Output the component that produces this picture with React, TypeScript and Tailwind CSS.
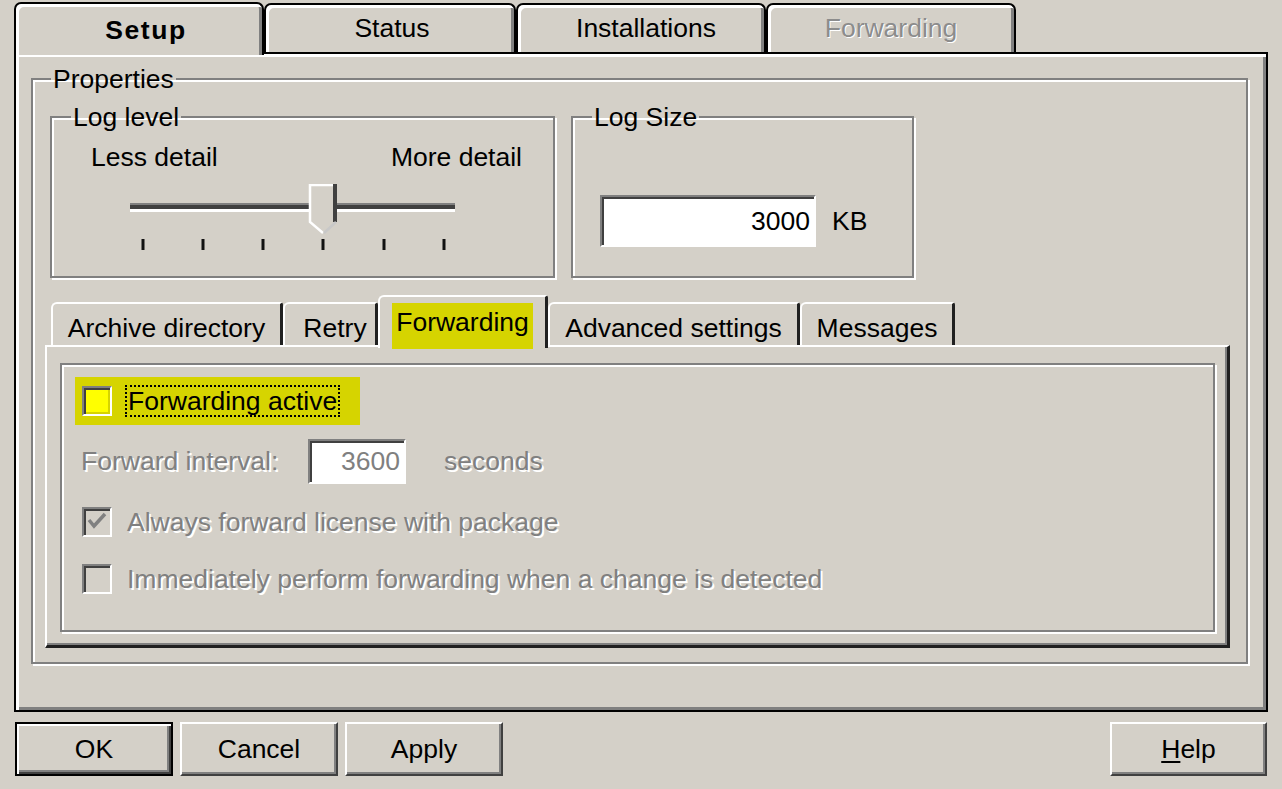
import type { ReactNode } from "react";

const raised =
  "border-2 border-t-white border-l-white border-r-[#404040] border-b-[#404040] shadow-[inset_-2px_-2px_0_#808080]";
const sunken =
  "border-2 border-t-[#808080] border-l-[#808080] border-r-white border-b-white shadow-[inset_2px_2px_0_#404040]";
const etched =
  "border-2 border-[#808080] shadow-[inset_2px_2px_0_#fff,2px_2px_0_#fff]";
const dim = "text-[#808080] [text-shadow:2px_2px_0_#fff]";

function TopTab({
  label,
  width,
  selected,
  disabled,
  className = "",
}: {
  label: string;
  width: string;
  selected?: boolean;
  disabled?: boolean;
  className?: string;
}) {
  return (
    <div
      className={`flex justify-center rounded-t-[7px] border-2 border-b-0 border-black bg-[#d4d0c8] shadow-[inset_3px_3px_0_#fff,inset_-3px_0_0_#808080] ${width} ${
        selected
          ? "relative z-10 -mb-[3px] h-[53px] pt-[11px] font-bold tracking-[1.6px]"
          : "h-[49px] pt-[8px]"
      } ${disabled ? "text-[#8c8c8c] [text-shadow:1px_1px_0_#fff]" : ""} ${className}`}
    >
      {label}
    </div>
  );
}

function SubTab({
  children,
  width,
  selected,
  className = "",
}: {
  children: ReactNode;
  width: string;
  selected?: boolean;
  className?: string;
}) {
  return (
    <div
      className={`flex justify-center rounded-tl-[6px] rounded-tr-[3px] border-l-2 border-t-2 border-r-[3px] border-white border-r-[#202020] bg-[#d4d0c8] ${width} ${
        selected ? "relative z-10 -mb-[3px] h-[53px] pt-[10px]" : "h-[43px] pt-[9px]"
      } ${className}`}
    >
      {children}
    </div>
  );
}

function Check({
  checked,
  disabled,
  highlight,
}: {
  checked?: boolean;
  disabled?: boolean;
  highlight?: boolean;
}) {
  const fill = highlight
    ? "bg-[#ffff00] shadow-[inset_2px_2px_0_#404040,inset_-2px_-2px_0_#d6d400]"
    : disabled
      ? "bg-[#d4d0c8] shadow-[inset_2px_2px_0_#404040,inset_-2px_-2px_0_#d4d0c8]"
      : "bg-white shadow-[inset_2px_2px_0_#404040,inset_-2px_-2px_0_#d4d0c8]";
  return (
    <span
      className={`flex h-[30px] w-[30px] shrink-0 border-2 border-t-[#808080] border-l-[#808080] border-r-white border-b-white ${fill}`}
    >
      {checked && (
        <svg width="26" height="26" viewBox="0 0 26 26">
          <path
            d="M5 11 L10 17 L21 5"
            fill="none"
            stroke="#808080"
            strokeWidth="3.5"
          />
        </svg>
      )}
    </span>
  );
}

function Slider() {
  const ticks = [13, 73, 133, 193, 254, 314];
  return (
    <svg width="330" height="68" viewBox="0 0 330 68" className="ml-[78px] mt-[12px]">
      <rect x="0" y="19" width="325" height="2" fill="#808080" />
      <rect x="0" y="21" width="325" height="4" fill="#404040" />
      <rect x="0" y="25" width="325" height="3" fill="#ffffff" />
      <polygon points="179,0 207,0 207,38 193,50 179,38" fill="#d4d0c8" />
      <polyline points="193,49 180,38 180,1 206,1" fill="none" stroke="#fff" strokeWidth="2.5" />
      <line x1="205" y1="0" x2="205" y2="38" stroke="#404040" strokeWidth="4" />
      <line x1="206" y1="38" x2="194" y2="49" stroke="#c8c8c8" strokeWidth="2.5" />
      {ticks.map((x) => (
        <rect key={x} x={x - 1.5} y="55" width="3" height="11" fill="#111" />
      ))}
    </svg>
  );
}

function Button({ children, isDefault, className = "" }: { children: ReactNode; isDefault?: boolean; className?: string }) {
  return (
    <div
      className={`flex h-[54px] items-center justify-center bg-[#d4d0c8] ${
        isDefault
          ? "border-2 border-black shadow-[inset_2px_2px_0_#fff,inset_-2px_-2px_0_#404040,inset_-4px_-4px_0_#808080]"
          : raised
      } ${className}`}
    >
      {children}
    </div>
  );
}

export default function App() {
  return (
    <div className="flex h-[789px] w-[1282px] flex-col overflow-hidden bg-[#d4d0c8] pt-[2px] font-['Liberation_Sans',Arial,sans-serif] text-[26.5px] leading-[30px] text-black">
      <div className="flex h-[50px] items-end pl-[14px]">
        <TopTab label="Setup" width="w-[250px]" selected className="pl-[14px]" />
        <TopTab label="Status" width="w-[252px]" className="pl-[4px]" />
        <TopTab label="Installations" width="w-[250px]" className="pl-[10px]" />
        <TopTab label="Forwarding" width="w-[250px]" disabled />
      </div>

      <div className="ml-[14px] h-[660px] w-[1254px] border-2 border-black pl-[15px] pt-[10px] shadow-[inset_3px_3px_0_#fff,inset_-3px_-3px_0_#808080]">
        <fieldset className={`h-[600px] w-[1217px] pl-[12px] ${etched}`}>
          <legend className="ml-[6px] px-[2px]">Properties</legend>

          <div className="mt-[8px] flex">
            <fieldset className={`ml-[5px] h-[176px] w-[505px] ${etched}`}>
              <legend className="ml-[19px] px-[2px]">Log level</legend>
              <div className="mt-[10px] flex justify-between pl-[39px] pr-[31px]">
                <span>Less detail</span>
                <span>More detail</span>
              </div>
              <Slider />
            </fieldset>

            <fieldset className={`ml-[16px] h-[176px] w-[343px] ${etched}`}>
              <legend className="ml-[19px] px-[2px]">Log Size</legend>
              <div className="mt-[63px] flex items-center gap-[16px] pl-[27px]">
                <div className={`flex h-[52px] w-[216px] items-center justify-end bg-white pr-[4px] ${sunken}`}>
                  3000
                </div>
                <span>KB</span>
              </div>
            </fieldset>
          </div>

          <div className="mt-[17px] flex h-[50px] items-end pl-[6px]">
            <SubTab width="w-[232px]">Archive directory</SubTab>
            <SubTab width="w-[95px]" className="pl-[10px]">Retry</SubTab>
            <SubTab width="w-[170px]" selected>
              <span className="-mt-[4px] h-[46px] bg-[#d6d400] px-[4px] pt-[4px]">Forwarding</span>
            </SubTab>
            <SubTab width="w-[252px]">Advanced settings</SubTab>
            <SubTab width="w-[155px]">Messages</SubTab>
          </div>

          <div className="h-[303px] w-[1185px] border-l-2 border-t-2 border-r-[3px] border-b-[3px] border-white border-r-[#202020] border-b-[#202020] pl-[13px] pt-[16px] shadow-[inset_-2px_-2px_0_#808080]">
            <div className={`h-[269px] w-[1155px] pl-[20px] pt-[20px] ${etched}`}>
              <div className="-my-[8px] -ml-[7px] flex w-fit items-center gap-[13px] bg-[#d6d400] py-[8px] pl-[7px] pr-[20px]">
                <Check highlight />
                <span className="border-2 border-dotted border-black px-[1px] leading-[28px]">
                  Forwarding active
                </span>
              </div>

              <div className="mt-[21px] flex h-[46px] items-center">
                <span className={`-ml-[1px] w-[227px] ${dim}`}>Forward interval:</span>
                <div className={`flex h-[45px] w-[98px] items-center justify-end bg-white pr-[4px] ${sunken} ${dim} [text-shadow:none]`}>
                  3600
                </div>
                <span className={`ml-[38px] ${dim}`}>seconds</span>
              </div>

              <div className="mt-[21px] flex h-[34px] items-center gap-[15px]">
                <Check checked disabled />
                <span className={dim}>Always forward license with package</span>
              </div>

              <div className="mt-[23px] flex h-[34px] items-center gap-[15px]">
                <Check disabled />
                <span className={dim}>Immediately perform forwarding when a change is detected</span>
              </div>
            </div>
          </div>
        </fieldset>
      </div>

      <div className="mt-[10px] flex px-[15px]">
        <Button isDefault className="w-[158px]">OK</Button>
        <Button className="ml-[7px] w-[158px]">Cancel</Button>
        <Button className="ml-[7px] w-[158px]">Apply</Button>
        <Button className="ml-auto w-[157px]">
          <span>
            <span className="underline decoration-2 underline-offset-[3px]">H</span>elp
          </span>
        </Button>
      </div>
    </div>
  );
}
